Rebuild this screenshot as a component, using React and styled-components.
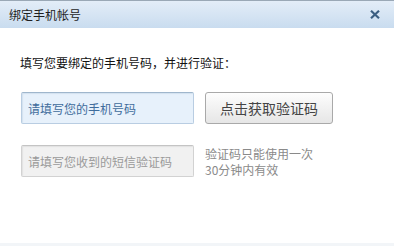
import React from "react";
import styled, { createGlobalStyle } from "styled-components";

const GlobalStyle = createGlobalStyle`
    html, body {
        margin: 0;
        padding: 0;
        background: #fff;
    }
    body {
        font-family: "Noto Sans CJK SC", "Liberation Sans", sans-serif;
    }
`;

const Dialog = styled.div`
    width: 394px;
    height: 246px;
    box-sizing: border-box;
    background: #fff;
    border-top: 1px solid #9aa8b6;
    border-bottom: 3px solid #f2f5f8;
    display: flex;
    flex-direction: column;
`;

const Header = styled.div`
    height: 27px;
    display: flex;
    align-items: center;
    justify-content: space-between;
    padding: 0 13px 0 9px;
    background: linear-gradient(to bottom, #e3edf8, #c9dcef);
`;

const Title = styled.span`
    font-size: 12px;
    line-height: 14px;
    color: #1e1e1e;
`;

const CloseButton = styled.button`
    width: 12px;
    height: 12px;
    padding: 0;
    border: none;
    background: none;
    display: flex;
    align-items: center;
    justify-content: center;
    cursor: pointer;
`;

const Body = styled.div`
    padding: 28px 0 0 21px;
    display: flex;
    flex-direction: column;
`;

const Prompt = styled.p`
    margin: 0 0 22px -1px;
    font-size: 12px;
    line-height: 14px;
    color: #111;
`;

const Row = styled.div`
    display: flex;
    align-items: ${(p) => (p.$top ? "flex-start" : "center")};
    gap: 11px;
    margin-bottom: ${(p) => p.$gap || 0}px;
`;

const Field = styled.input`
    width: 173px;
    height: 32px;
    box-sizing: border-box;
    padding: 0 6px;
    font-family: inherit;
    font-size: 12px;
    border-radius: 2px;
    outline: none;
    border: 1px solid ${(p) => (p.$active ? "#b9cde2" : "#d2d2d2")};
    border-top-color: ${(p) => (p.$active ? "#9fb6cc" : "#c4c4c4")};
    background: ${(p) => (p.$active ? "#e7f1fb" : "#f1f1f1")};
    box-shadow: inset 1px 1px 1px ${(p) => (p.$active ? "#d3e1ef" : "#e2e2e2")};

    &::placeholder {
        color: ${(p) => (p.$active ? "#3f6c9c" : "#9a9a9a")};
    }
`;

const CodeButton = styled.button`
    width: 128px;
    height: 32px;
    box-sizing: border-box;
    font-family: inherit;
    font-size: 14px;
    color: #444;
    border: 1px solid #a9a9a9;
    border-radius: 3px;
    background: linear-gradient(to bottom, #fdfdfd, #e6e6e6);
    cursor: pointer;
`;

const Hint = styled.div`
    margin-top: 1px;
    font-size: 12px;
    line-height: 16px;
    color: #8a8a8a;
`;

export default function App() {
    return (
        <>
            <GlobalStyle />
            <Dialog>
                <Header>
                    <Title>绑定手机帐号</Title>
                    <CloseButton aria-label="关闭">
                        <svg width="10" height="9" viewBox="0 0 10 9">
                            <path d="M1 0.8 L9 8.2 M9 0.8 L1 8.2" stroke="#3c5f82" strokeWidth="2.2" />
                        </svg>
                    </CloseButton>
                </Header>
                <Body>
                    <Prompt>填写您要绑定的手机号码，并进行验证：</Prompt>
                    <Row $gap={21}>
                        <Field $active placeholder="请填写您的手机号码" />
                        <CodeButton>点击获取验证码</CodeButton>
                    </Row>
                    <Row $top>
                        <Field placeholder="请填写您收到的短信验证码" />
                        <Hint>
                            验证码只能使用一次
                            <br />
                            30分钟内有效
                        </Hint>
                    </Row>
                </Body>
            </Dialog>
        </>
    );
}
